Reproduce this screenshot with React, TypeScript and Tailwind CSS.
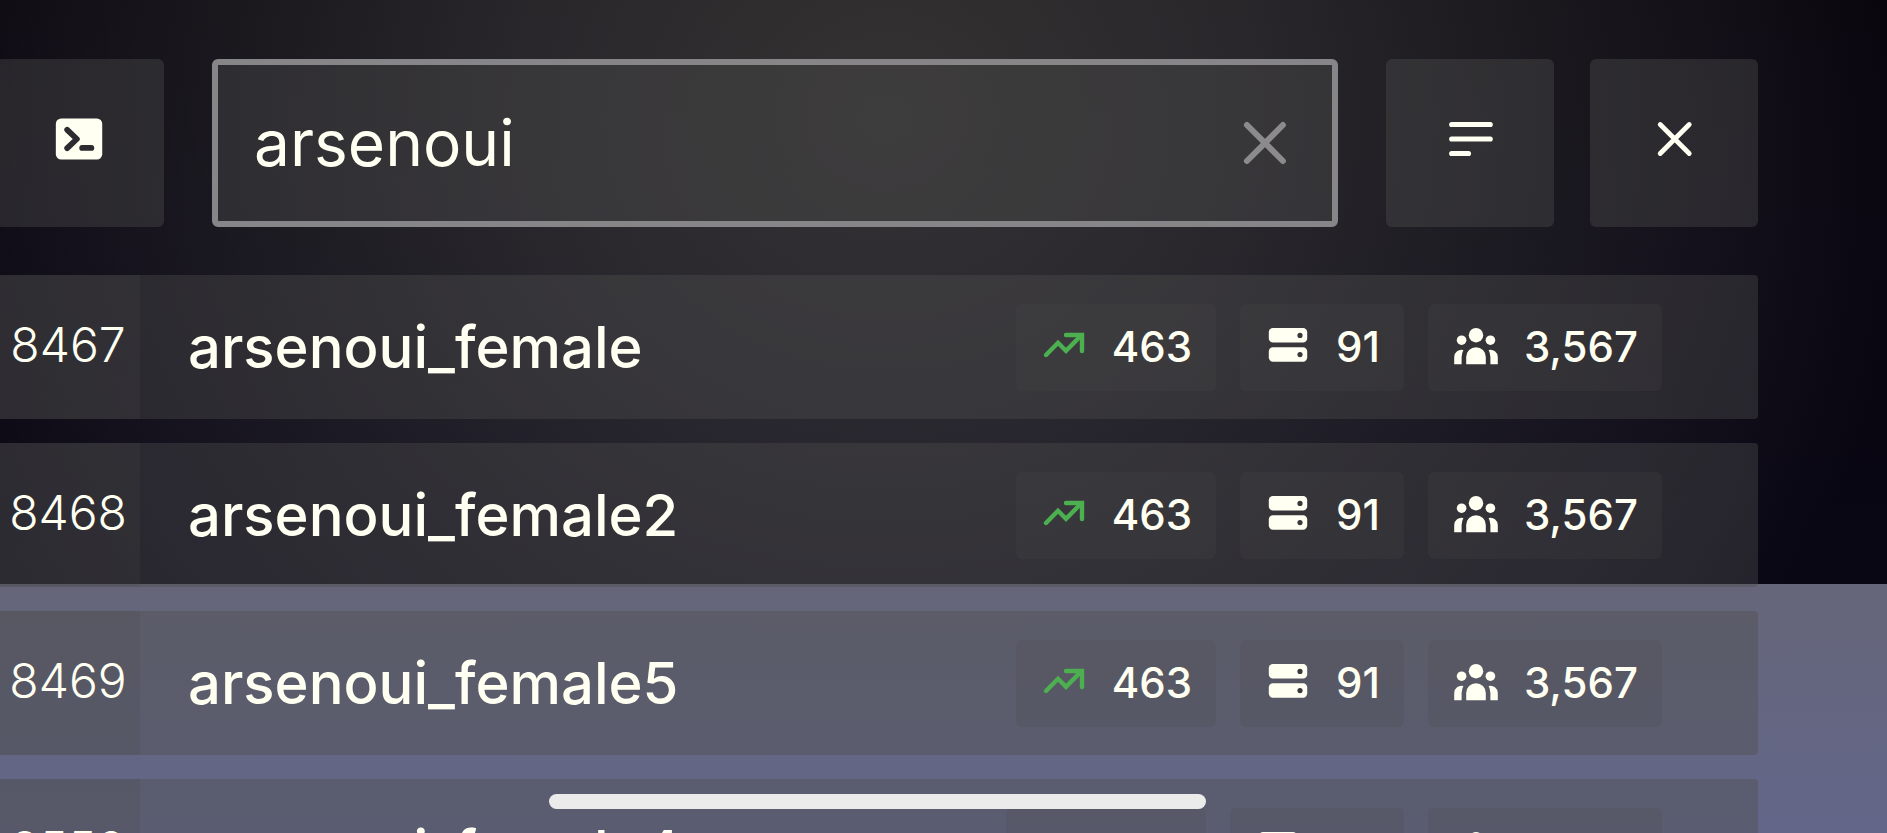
import React, { useState } from 'react';

interface Entry {
  rank: string;
  name: string;
  trend: string;
  servers: string;
  members: string;
}

const entries: Entry[] = [
  { rank: '8467', name: 'arsenoui_female', trend: '463', servers: '91', members: '3,567' },
  { rank: '8468', name: 'arsenoui_female2', trend: '463', servers: '91', members: '3,567' },
  { rank: '8469', name: 'arsenoui_female5', trend: '463', servers: '91', members: '3,567' },
  { rank: '8550', name: 'arsenoui_female4', trend: '463', servers: '90', members: '3,567' }
];

const TerminalIcon = () => (
  <svg viewBox="0 0 24 24" className="size-[58px]" aria-hidden="true">
    <rect x="2" y="3.5" width="19.2" height="17" rx="2.2" fill="currentColor" />
    <path d="M6.7 8.2l4 3.8-4 3.8M12.9 15.7h3.8" fill="none" stroke="#2d2b2f" strokeWidth="2.4" strokeLinecap="round" strokeLinejoin="round" />
  </svg>
);

const SortIcon = () => (
  <svg viewBox="0 0 24 24" className="size-[58px]" fill="none" stroke="currentColor" strokeWidth="2.1" strokeLinecap="round" aria-hidden="true">
    <path d="M4.4 6h16M4.4 12h16M4.4 18h7" />
  </svg>
);

const CloseIcon = ({ className }: { className: string }) => (
  <svg viewBox="0 0 24 24" className={className} fill="none" stroke="currentColor" strokeWidth="2" strokeLinecap="round" aria-hidden="true">
    <path d="m6.3 6 12 12M18.3 6l-12 12" />
  </svg>
);

const TrendIcon = () => (
  <svg viewBox="0 0 24 24" className="size-12 shrink-0 text-[#4caf50]" fill="none" stroke="currentColor" strokeWidth="2.2" strokeLinecap="round" aria-hidden="true">
    <path d="M3 17l6-6.1 4 4L20.6 7.2" strokeLinejoin="miter" />
    <path d="M13 7h8v8" />
  </svg>
);

const ServersIcon = () => (
  <svg viewBox="0 0 24 24" className="size-12 shrink-0" fill="currentColor" aria-hidden="true">
    <rect x="2.4" y="3.5" width="19.2" height="7.3" rx="2.1" />
    <rect x="2.4" y="13.1" width="19.2" height="7.3" rx="2.1" />
    <circle cx="18" cy="7.2" r="1.3" fill="#39383b" />
    <circle cx="18" cy="16.8" r="1.3" fill="#39383b" />
  </svg>
);

const MembersIcon = () => (
  <svg viewBox="0 0 24 24" className="size-12 shrink-0" fill="currentColor" aria-hidden="true">
    <circle cx="12" cy="7.1" r="3.6" />
    <circle cx="4.8" cy="9.6" r="2.4" />
    <circle cx="19.2" cy="9.6" r="2.4" />
    <path d="M7.1 21.6V18a4.9 4.9 0 0 1 9.8 0v3.6z" />
    <path d="M1.1 21.6V18a3.6 3.6 0 0 1 4.6-3.5A8 8 0 0 0 4.8 18v3.6z" />
    <path d="M22.9 21.6V18a3.6 3.6 0 0 0-4.6-3.5 8 8 0 0 1 .9 3.5v3.6z" />
  </svg>
);

const Stat = ({ icon, value }: { icon: React.ReactNode; value: string }) => (
  <div className="flex items-center gap-6 rounded-md bg-[#4d4d4d]/20 px-6 pt-[17px] pb-[22px]">
    {icon}
    <span className="pt-1 text-[42px] leading-[44px] font-medium">{value}</span>
  </div>
);

const Row = ({ entry }: { entry: Entry }) => (
  <li className="flex h-36 shrink-0 items-stretch rounded bg-[#4d4d4d]/40">
    <div className="flex w-36 items-center justify-center rounded-l bg-[#4d4d4d]/20 pb-1 text-[48px] font-light">
      {entry.rank}
    </div>
    <div className="flex flex-1 items-center justify-between pr-24 pl-12">
      <span className="text-[58px] leading-[72px] font-medium">{entry.name}</span>
      <div className="flex gap-6">
        <Stat icon={<TrendIcon />} value={entry.trend} />
        <Stat icon={<ServersIcon />} value={entry.servers} />
        <Stat icon={<MembersIcon />} value={entry.members} />
      </div>
    </div>
  </li>
);

const toolButton = 'flex size-[168px] shrink-0 items-center justify-center rounded-md bg-[#4d4d4d]/40 pb-2';

const App: React.FC = () => {
  const [query, setQuery] = useState('arsenoui');

  return (
    <div className="relative h-screen overflow-hidden font-[Inter,sans-serif] text-[#fffff2]">
      {/* Backdrop */}
      <div className="absolute inset-0 flex flex-col">
        <div className="flex-1 bg-[linear-gradient(to_bottom,transparent,rgba(40,40,120,0.08)),radial-gradient(ellipse_55%_160%_at_47%_20%,#343231_0%,#29272a_35%,#1c1a1f_60%,#120f17_82%,#07040c_100%)]" />
        <div className="h-[249px] bg-linear-to-b from-[#656679] to-[#636689]" />
      </div>

      <main className="relative -ml-1 flex flex-col gap-12 pt-[59px] pr-[129px]">
        <header className="flex items-center">
          <button type="button" aria-label="Console" className={toolButton}>
            <TerminalIcon />
          </button>
          <div className="mx-12 flex h-[168px] min-w-0 flex-1 items-center rounded-md border-6 border-[#868688] bg-[#4d4d4d]/40 pr-8 pl-9">
            <input
              type="text"
              aria-label="Search"
              value={query}
              onChange={(e) => setQuery(e.target.value)}
              className="min-w-0 flex-1 bg-transparent text-[64px] leading-[84px] outline-none"
            />
            <button type="button" aria-label="Clear search" className="text-[#8b8b8d]" onClick={() => setQuery('')}>
              <CloseIcon className="size-[72px]" />
            </button>
          </div>
          <div className="flex gap-9">
            <button type="button" aria-label="Sort" className={toolButton}>
              <SortIcon />
            </button>
            <button type="button" aria-label="Close" className={toolButton}>
              <CloseIcon className="size-[58px]" />
            </button>
          </div>
        </header>

        <ul className="flex flex-col gap-6">
          {entries.map((entry) => (
            <Row key={entry.rank} entry={entry} />
          ))}
        </ul>
      </main>

      {/* Home indicator */}
      <div className="absolute bottom-6 left-[549px] h-[15px] w-[657px] rounded-full bg-[#ebebeb]" />
    </div>
  );
};

export default App;
